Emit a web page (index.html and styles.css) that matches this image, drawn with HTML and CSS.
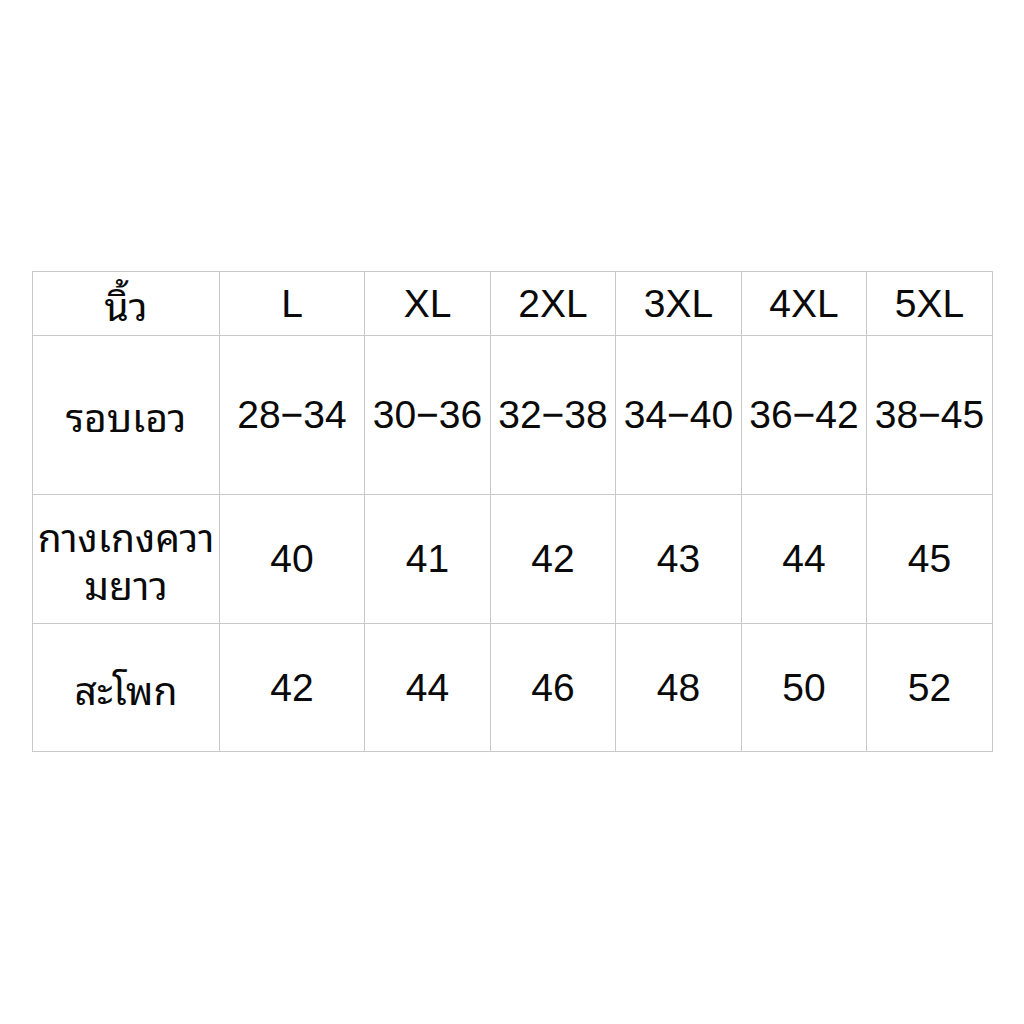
FILE: index.html
```html
<!DOCTYPE html>
<html lang="th">
<head>
<meta charset="utf-8">
<title>Size chart</title>
<link rel="stylesheet" href="styles.css">
</head>
<body>
<div class="page">
  <div class="chart">
    <div class="cell head">นิ้ว</div>
    <div class="cell">L</div>
    <div class="cell">XL</div>
    <div class="cell">2XL</div>
    <div class="cell">3XL</div>
    <div class="cell">4XL</div>
    <div class="cell">5XL</div>

    <div class="cell head">รอบเอว</div>
    <div class="cell">28−34</div>
    <div class="cell">30−36</div>
    <div class="cell">32−38</div>
    <div class="cell">34−40</div>
    <div class="cell">36−42</div>
    <div class="cell">38−45</div>

    <div class="cell head"><span class="lines"><span class="line">กางเกงควา</span><span class="line">มยาว</span></span></div>
    <div class="cell">40</div>
    <div class="cell">41</div>
    <div class="cell">42</div>
    <div class="cell">43</div>
    <div class="cell">44</div>
    <div class="cell">45</div>

    <div class="cell head">สะโพก</div>
    <div class="cell">42</div>
    <div class="cell">44</div>
    <div class="cell">46</div>
    <div class="cell">48</div>
    <div class="cell">50</div>
    <div class="cell">52</div>
  </div>
</div>
</body>
</html>
```

FILE: styles.css
```css
html, body {
  margin: 0;
  padding: 0;
  background: #ffffff;
}

.page {
  width: 1024px;
  height: 1024px;
  padding: 271px 0 0 32px;
  box-sizing: border-box;
}

.chart {
  display: grid;
  grid-template-columns: 187px 145px 126px 125px 126px 125px 126px;
  grid-template-rows: 64px 159px 129px 128px;
  width: max-content;
  border-top: 1px solid #c9c9c9;
  border-left: 1px solid #c9c9c9;
  font-family: "Liberation Sans", Arial, sans-serif;
  font-size: 39px;
  color: #0a0a0a;
}

.cell {
  display: flex;
  align-items: center;
  justify-content: center;
  text-align: center;
  border-right: 1px solid #c9c9c9;
  border-bottom: 1px solid #c9c9c9;
  white-space: nowrap;
  line-height: 48px;
}

.head {
  font-family: "Noto Sans Thai Looped", "Garuda", "Loma", "Norasi", "Tlwg Typo", "Noto Sans Thai", "Liberation Sans", sans-serif;
  font-size: 39px;
  font-weight: 400;
}

.lines {
  display: flex;
  flex-direction: column;
  align-items: center;
  gap: 4px;
}

.line {
  display: block;
  line-height: 44px;
}
```
